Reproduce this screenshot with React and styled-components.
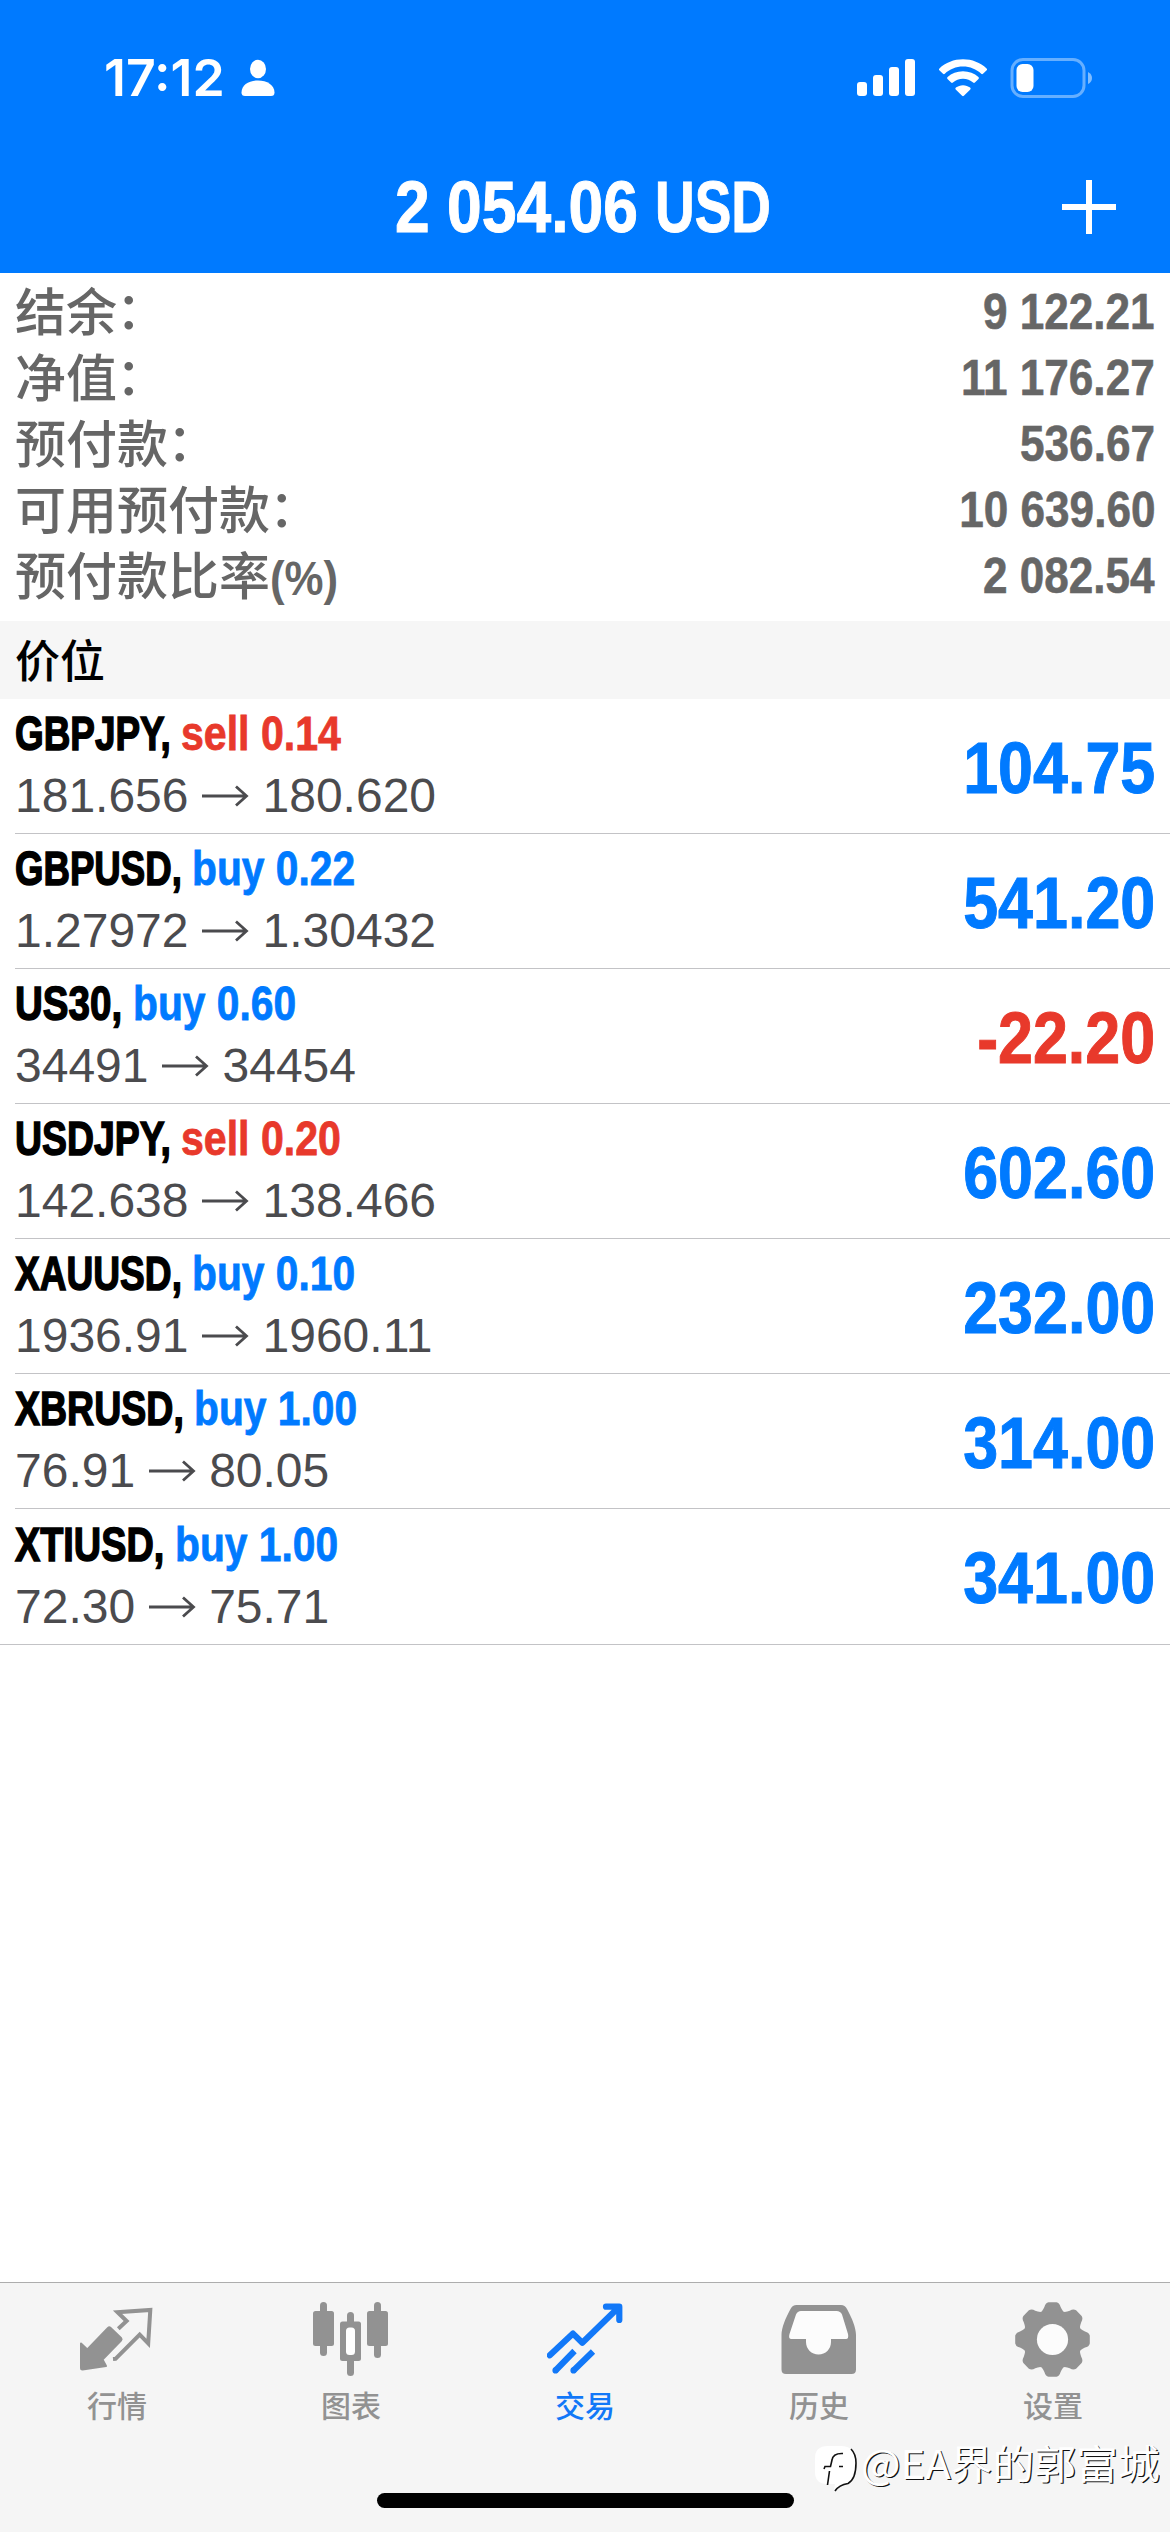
import React, { useLayoutEffect, useRef, useState } from 'react'
import styled, { createGlobalStyle } from 'styled-components'

const BLUE = '#007aff'
const RED = '#e8392b'
const LATIN = "'Liberation Sans', Arial, sans-serif"
const CJK = "'Noto Sans CJK SC', 'Liberation Sans', sans-serif"

const GlobalStyle = createGlobalStyle`
  * {
    box-sizing: border-box;
  }
  body {
    margin: 0;
    background: #fff;
  }
`

const Screen = styled.div`
  position: relative;
  display: flex;
  flex-direction: column;
  width: 1170px;
  height: 2532px;
  overflow: hidden;
  background: #fff;
  font-family: ${LATIN};
`

const Header = styled.header`
  height: 273px;
  flex: none;
  background: ${BLUE};
  color: #fff;
`

const StatusBar = styled.div`
  display: flex;
  align-items: center;
  justify-content: space-between;
  height: 155px;
  padding: 0 77px 0 104px;
`

const StatusGroup = styled.div`
  display: flex;
  align-items: center;
  gap: ${(props) => props.$gap}px;
`

const Clock = styled.span`
  font-family: Inter, ${LATIN};
  font-size: 51px;
  font-weight: 600;
  line-height: 60px;
`

const NavBar = styled.div`
  display: grid;
  grid-template-columns: 160px 1fr 160px;
  align-items: center;
  height: 104px;
`

const Title = styled.h1`
  grid-column: 2;
  display: flex;
  justify-content: center;
  margin: 0;
  padding-right: 4px;
  font-size: 72px;
  line-height: 80px;
  font-weight: 700;
  -webkit-text-stroke: 1px currentColor;
`

const AddButton = styled.button`
  justify-self: end;
  display: flex;
  margin-right: 54px;
  padding: 0;
  border: 0;
  background: none;
  color: #fff;
`

const Fit = styled.span`
  display: inline-block;
  white-space: pre;
`

const FitInner = styled.span`
  display: inline-block;
  transform-origin: left center;
`

const Summary = styled.dl`
  display: flex;
  flex-direction: column;
  flex: none;
  height: 348px;
  margin: 0;
  padding: 6px 15px 0;
  color: #666;
`

const SummaryRow = styled.div`
  display: flex;
  justify-content: space-between;
  align-items: center;
  height: 66px;
`

const SummaryLabel = styled.dt`
  margin-top: -6px;
  font-family: ${CJK};
  font-size: 51px;
  font-weight: 500;
  line-height: 60px;
`

const Colon = styled.span`
  display: inline-block;
  margin-left: -1px;
  transform: translateY(-2px);
`

const Unit = styled.span`
  font-family: ${LATIN};
  font-size: 49px;
  font-weight: 700;
  line-height: 36px;
`

const SummaryValue = styled.dd`
  margin: 0;
  font-size: 50px;
  font-weight: 700;
  line-height: 66px;
  transform: scaleX(0.882);
  transform-origin: right center;
  -webkit-text-stroke: 0.6px currentColor;
`

const SectionHeader = styled.h2`
  flex: none;
  height: 78px;
  margin: 0;
  padding-left: 15px;
  background: #f6f6f6;
  color: #000;
  font-family: ${CJK};
  font-size: 45px;
  font-weight: 500;
  line-height: 75px;
`

const Positions = styled.ul`
  flex: 1;
  margin: 0;
  padding: 0;
  list-style: none;
`

const PositionRow = styled.li`
  display: flex;
  justify-content: space-between;
  align-items: center;
  height: 135px;
  margin-left: 15px;
  padding-right: 15px;
  border-bottom: 1px solid #c3c3c6;

  &:last-child {
    height: 136px;
    margin-left: 0;
    padding-left: 15px;
  }
`

const Deal = styled.div`
  display: flex;
  font-size: 48px;
  font-weight: 700;
  line-height: 62px;
`

const Symbol = styled.span`
  color: #000;
  -webkit-text-stroke: 1.5px currentColor;
`

const Side = styled.span`
  color: ${(props) => (props.$sell ? RED : BLUE)};
  -webkit-text-stroke: 0.8px currentColor;
`

const Prices = styled.div`
  display: flex;
  align-items: center;
  gap: 13.500px;
  height: 62px;
  margin-bottom: 2px;
  color: #4b4b4e;
  font-size: 48px;
  line-height: 62px;
`

const Profit = styled.span`
  margin-top: 3px;
  color: ${(props) => (props.$loss ? RED : BLUE)};
  font-size: 72px;
  font-weight: 700;
  line-height: 80px;
  transform: scaleX(0.872);
  transform-origin: right center;
  -webkit-text-stroke: 1px currentColor;
`

const TabBar = styled.nav`
  flex: none;
  display: grid;
  grid-template-columns: repeat(5, 1fr);
  height: 250px;
  padding-top: 18px;
  border-top: 1px solid #adadad;
  background: #f5f5f5;
`

const Tab = styled.a`
  display: flex;
  flex-direction: column;
  align-items: center;
  color: ${(props) => (props.$active ? '#1278f8' : '#929292')};
`

const TabLabel = styled.span`
  margin-top: 5px;
  font-family: ${CJK};
  font-size: 30px;
  font-weight: 500;
  line-height: 44px;
`

const HomeIndicator = styled.div`
  position: absolute;
  left: 377px;
  bottom: 24px;
  width: 417px;
  height: 15px;
  border-radius: 8px;
  background: #000;
`

const Watermark = styled.div`
  position: absolute;
  right: 10px;
  bottom: 38px;
  display: flex;
  align-items: flex-start;
  color: #fff;
  font-family: 'Noto Sans CJK SC', sans-serif;
  font-size: 40px;
  line-height: 50px;
  text-shadow: 1.2px 1.2px 0 #111;
`

const WatermarkText = styled.span`
  margin-top: -7px;
`

// Squeezes its text horizontally so that it takes exactly `width` pixels.
const FitText = ({ width, children }) => {
  const ref = useRef(null)
  const [scale, setScale] = useState(1)

  useLayoutEffect(() => {
    setScale(width / ref.current.offsetWidth)
  }, [width, children])

  return (
    <Fit style={{ width }}>
      <FitInner ref={ref} style={{ transform: `scaleX(${scale})` }}>
        {children}
      </FitInner>
    </Fit>
  )
}

const PersonIcon = () => (
  <svg width="34" height="38" viewBox="0 0 34 38" fill="currentColor">
    <ellipse cx="17" cy="10" rx="8" ry="9.2" />
    <path d="M4 37Q0.500 37 0.500 33.500C0.500 26 8 21.500 17 21.500S33.500 26 33.500 33.500Q33.500 37 30 37Z" />
  </svg>
)

const SignalIcon = () => (
  <svg width="59" height="38" viewBox="0 0 59 38" fill="currentColor">
    <rect x="0" y="23" width="10" height="14" rx="3" />
    <rect x="16" y="16" width="10" height="21" rx="3" />
    <rect x="32" y="8" width="10" height="29" rx="3" />
    <rect x="48" y="0" width="10" height="37" rx="3" />
  </svg>
)

const WifiIcon = () => (
  <svg width="52" height="38" viewBox="0 0 52 38" fill="currentColor">
    <path d="M26 7.600C33 7.600 39.400 10.300 44.200 14.800Q45.100 15.600 46 14.800L49.700 11.200Q50.600 10.300 49.600 9.400C43.400 3.500 35 0.200 26 0.200S8.600 3.500 2.400 9.400Q1.400 10.300 2.300 11.200L6 14.800Q6.900 15.600 7.800 14.800C12.600 10.300 19 7.600 26 7.600Z" />
    <path d="M26 19.700C29.900 19.700 33.400 21.100 36.100 23.500Q37 24.300 37.900 23.500L41.500 19.900Q42.500 18.900 41.400 18C37.400 14.300 32 12.200 26 12.200S14.600 14.300 10.600 18Q9.500 18.900 10.500 19.900L14.100 23.500Q15 24.300 15.900 23.500C18.600 21.100 22.100 19.700 26 19.700Z" />
    <path d="M33.300 30.500Q34.200 29.500 33.100 28.600C31.200 27.100 28.700 26.200 26 26.200S20.800 27.100 18.900 28.600Q17.800 29.500 18.700 30.500L25.100 36.800Q26 37.700 26.900 36.800Z" />
  </svg>
)

const BatteryIcon = () => (
  <svg width="83" height="40" viewBox="0 0 83 40">
    <rect x="2" y="1.500" width="72" height="37" rx="11" fill="none" stroke="#fff" strokeOpacity="0.4" strokeWidth="3" />
    <rect x="6.500" y="6" width="17" height="28" rx="6" fill="#fff" />
    <path d="M78 14Q82 16 82 20T78 26Z" fill="#fff" fillOpacity="0.5" />
  </svg>
)

const PlusIcon = () => (
  <svg width="54" height="54" viewBox="0 0 54 54" stroke="currentColor" strokeWidth="6">
    <path d="M27 0V54M0 27H54" />
  </svg>
)

const ArrowIcon = () => (
  <svg width="47" height="24" viewBox="0 0 47 24" fill="none" stroke="currentColor" strokeWidth="2.800">
    <path d="M0 12H44M34 2.500L44.500 12L34 21.500" />
  </svg>
)

const QuotesIcon = () => (
  <>
    <path
      d="M2 42.500L8.300 48.500L29 27Q30.300 25.800 31.600 27L42 37Q43.200 38.300 42 39.600L23.500 58.500L27 65L3.500 68.500Q2 68.500 2 67Z"
      fill="currentColor"
      stroke="currentColor"
      strokeWidth="2"
      strokeLinejoin="round"
    />
    <path d="M39.300 27.700L47.600 20L38.500 11.200L71.300 9L69.200 42.300L60.700 33.700L36.500 57.800L34 58" fill="none" stroke="currentColor" strokeWidth="4" />
  </>
)

const ChartIcon = () => (
  <g fill="currentColor">
    <rect x="0" y="10" width="21" height="35" rx="2.500" />
    <rect x="7" y="1" width="7" height="54" rx="3.500" />
    <rect x="54" y="10" width="21" height="35" rx="2.500" />
    <rect x="61" y="1" width="7" height="56" rx="3.500" />
    <rect x="34" y="11" width="7" height="64" rx="3.500" />
    <rect x="27" y="20.500" width="21" height="39.500" rx="2.500" />
    <rect x="33" y="26.500" width="9" height="27.500" rx="3.500" fill="#fff" />
  </g>
)

const TradeIcon = () => (
  <g fill="none" stroke="currentColor" strokeWidth="6.200">
    <path d="M2.800 54.300L26 32.600L35.300 41.700L72 6M59 5.700H72.300V19" strokeLinecap="round" strokeLinejoin="round" />
    <path d="M27.500 50L8.500 69.500M46 50.500L26.500 69.500" />
    <path d="M8.500 69.500V69.400M26.500 69.500V69.400" strokeLinecap="round" />
  </g>
)

const HistoryIcon = () => (
  <>
    <path
      d="M15.500 4H60Q64 4 66 8C71 17 75 27 75 34V68.500Q75 73 70.500 73H5Q0.500 73 0.500 68.500V34C0.500 27 4.500 17 9.500 8Q11.500 4 15.500 4Z"
      fill="currentColor"
    />
    <path
      d="M20 10H55.500Q59.500 10 61 13.500L67 33Q68 38 65 38H50V41C50 48 44.500 53.500 37.500 53.500S25 48 25 41V38H10.500Q7 38 8.500 33L15 13.500Q16.500 10 20 10Z"
      fill="#fcfcfc"
    />
  </>
)

const toothPoint = (radius, degrees) => {
  const angle = (degrees * Math.PI) / 180
  return `${(37.5 + radius * Math.cos(angle)).toFixed(2)} ${(38.5 + radius * Math.sin(angle)).toFixed(2)}`
}

const gearPath = Array.from({ length: 8 }, (_, i) => i * 45)
  .map(
    (a) =>
      `${a === 0 ? 'M' : 'L'}${toothPoint(30, a - 21)}` +
      `Q${toothPoint(31.5, a - 17)} ${toothPoint(33.5, a - 14)}` +
      `Q${toothPoint(37.2, a - 11)} ${toothPoint(37.5, a - 6)}` +
      `L${toothPoint(37.5, a + 6)}` +
      `Q${toothPoint(37.2, a + 11)} ${toothPoint(33.5, a + 14)}` +
      `Q${toothPoint(31.5, a + 17)} ${toothPoint(30, a + 21)}`
  )
  .join('')

const SettingsIcon = () => (
  <>
    <path d={`${gearPath}Z`} fill="currentColor" />
    <circle cx="37.500" cy="38.500" r="15.600" fill="#fcfcfc" />
  </>
)

const WatermarkIcon = () => (
  <svg width="48" height="50" viewBox="0 0 48 50" fill="none">
    <path d="M15 2H28Q42 2 42 17V24Q42 38 33 40Q25 41 21 46L22 40H14Q2 40 2 28V14Q2 2 15 2Z" fill="#fff" />
    <path d="M38 5Q43 10 43 19Q43 35 35 39.500Q26 41 22 47" stroke="#111" strokeWidth="1.600" />
    <path d="M30 9.500Q20 9 19 16L17.500 22.500H12L11 25M16.500 27L14.500 41M26 22.500H30" stroke="#111" strokeWidth="1.600" />
  </svg>
)

const summary = [
  { label: '结余', value: '9 122.21' },
  { label: '净值', value: '11 176.27' },
  { label: '预付款', value: '536.67' },
  { label: '可用预付款', value: '10 639.60' },
  { label: '预付款比率', unit: '(%)', value: '2 082.54' },
]

const positions = [
  { symbol: 'GBPJPY', width: 166, side: 'sell', lots: '0.14', open: '181.656', current: '180.620', profit: '104.75' },
  { symbol: 'GBPUSD', width: 177, side: 'buy', lots: '0.22', open: '1.27972', current: '1.30432', profit: '541.20' },
  { symbol: 'US30', width: 118, side: 'buy', lots: '0.60', open: '34491', current: '34454', profit: '-22.20' },
  { symbol: 'USDJPY', width: 166, side: 'sell', lots: '0.20', open: '142.638', current: '138.466', profit: '602.60' },
  { symbol: 'XAUUSD', width: 177, side: 'buy', lots: '0.10', open: '1936.91', current: '1960.11', profit: '232.00' },
  { symbol: 'XBRUSD', width: 179, side: 'buy', lots: '1.00', open: '76.91', current: '80.05', profit: '314.00' },
  { symbol: 'XTIUSD', width: 160, side: 'buy', lots: '1.00', open: '72.30', current: '75.71', profit: '341.00' },
]

const tabs = [
  { label: '行情', Icon: QuotesIcon },
  { label: '图表', Icon: ChartIcon },
  { label: '交易', Icon: TradeIcon, active: true },
  { label: '历史', Icon: HistoryIcon },
  { label: '设置', Icon: SettingsIcon },
]

const Position = ({ symbol, width, side, lots, open, current, profit }) => (
  <PositionRow>
    <div>
      <Deal>
        <Symbol>
          <FitText width={width}>{`${symbol}, `}</FitText>
        </Symbol>
        <Side $sell={side === 'sell'}>
          <FitText width={side === 'sell' ? 160 : 163}>{`${side} ${lots}`}</FitText>
        </Side>
      </Deal>
      <Prices>
        <span>{open}</span>
        <ArrowIcon />
        <span>{current}</span>
      </Prices>
    </div>
    <Profit $loss={profit.startsWith('-')}>{profit}</Profit>
  </PositionRow>
)

const App = () => (
  <>
    <GlobalStyle />
    <Screen>
      <Header>
        <StatusBar>
          <StatusGroup $gap={16}>
            <Clock>
              <FitText width={121}>17:12</FitText>
            </Clock>
            <PersonIcon />
          </StatusGroup>
          <StatusGroup $gap={21}>
            <SignalIcon />
            <WifiIcon />
            <BatteryIcon />
          </StatusGroup>
        </StatusBar>
        <NavBar>
          <Title>
            <FitText width={260}>{'2 054.06 '}</FitText>
            <FitText width={116}>USD</FitText>
          </Title>
          <AddButton aria-label="add">
            <PlusIcon />
          </AddButton>
        </NavBar>
      </Header>
      <Summary>
        {summary.map(({ label, unit, value }) => (
          <SummaryRow key={label}>
            <SummaryLabel>
              {label}
              {unit ? (
                <Unit>
                  <FitText width={68}>{unit}</FitText>
                </Unit>
              ) : (
                <Colon>：</Colon>
              )}
            </SummaryLabel>
            <SummaryValue>{value}</SummaryValue>
          </SummaryRow>
        ))}
      </Summary>
      <SectionHeader>价位</SectionHeader>
      <Positions>
        {positions.map((position) => (
          <Position key={position.symbol} {...position} />
        ))}
      </Positions>
      <TabBar>
        {tabs.map(({ label, Icon, active }) => (
          <Tab key={label} $active={active}>
            <svg width="76" height="76" viewBox="0 0 76 76">
              <Icon />
            </svg>
            <TabLabel>{label}</TabLabel>
          </Tab>
        ))}
      </TabBar>
      <HomeIndicator />
      <Watermark>
        <WatermarkIcon />
        <WatermarkText>
          <FitText width={299}>@EA界的郭富城</FitText>
        </WatermarkText>
      </Watermark>
    </Screen>
  </>
)

export default App
